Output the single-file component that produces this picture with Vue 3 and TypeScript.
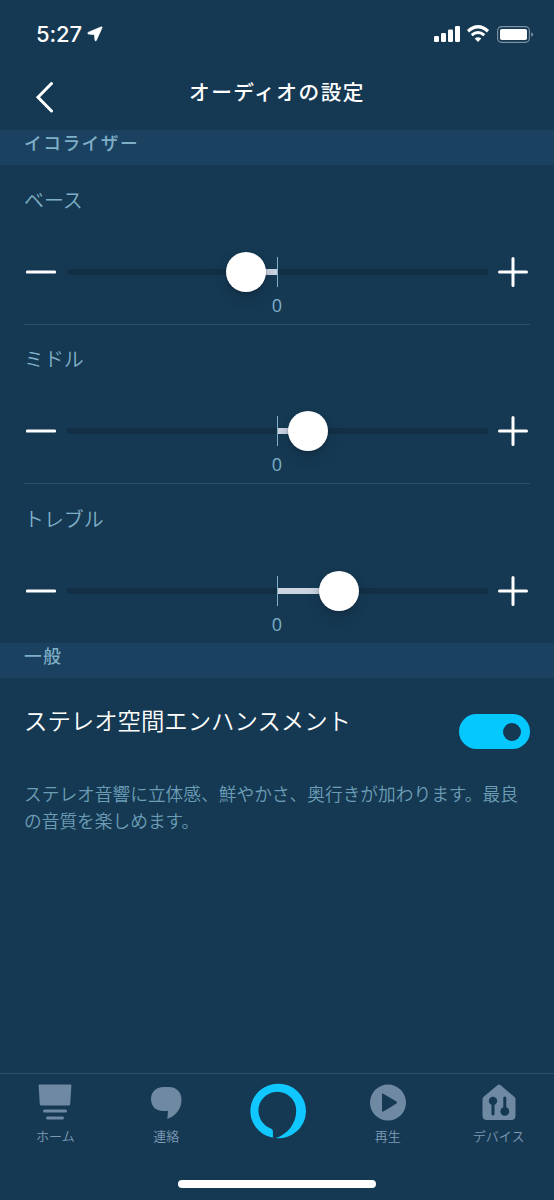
<script setup lang="ts">
interface Band {
  name: string
  value: number
}

const bands: Band[] = [
  { name: 'ベース', value: -31 },
  { name: 'ミドル', value: 31 },
  { name: 'トレブル', value: 62 },
]

const knobStyle = (b: Band) => ({ left: `calc(50% + ${b.value}px)` })
const fillStyle = (b: Band) => ({
  left: `calc(50% + ${Math.min(0, b.value)}px)`,
  width: `${Math.abs(b.value)}px`,
})
</script>

<template>
  <div class="screen">
    <div class="status">
      <span class="time">5:27</span>
      <svg class="loc" width="16" height="16" viewBox="0 0 16 16">
        <path d="M14.200.9 1.200 6.400Q.2 7.600 1.500 8L7.500 8.500 8 14.200Q8.500 15.500 9.300 14.400L15 1.700Q15.200.6 14.200.9Z" fill="#fff" stroke="#fff" stroke-width=".8" />
      </svg>
      <svg class="sys" width="100" height="18" viewBox="0 0 100 18">
        <g fill="#fff">
          <rect x="0" y="11" width="5" height="6" rx="1.3" />
          <rect x="7" y="8" width="5" height="9" rx="1.3" />
          <rect x="14" y="4.500" width="5" height="12.500" rx="1.3" />
          <rect x="21" y="1" width="5" height="16" rx="1.3" />
          <path d="M44 17 40.700 13.500Q44 10.900 47.300 13.500Z" />
          <rect x="66" y="4" width="27" height="11" rx="1.800" />
        </g>
        <g fill="none" stroke="#fff">
          <path d="M34 6.200Q44-2.700 54 6.200" stroke-width="3.200" />
          <path d="M37.700 10.200Q44 4.800 50.300 10.200" stroke-width="3" />
          <rect x="63.600" y="1.700" width="31.800" height="15.600" rx="4" stroke="#7d91a2" stroke-width="1.200" />
        </g>
        <path d="M97.200 7.200Q99.200 8 99.200 9.500T97.200 11.800Z" fill="#7d91a2" />
      </svg>
    </div>

    <header class="header">
      <svg class="back" width="20" height="32" viewBox="0 0 20 32">
        <path d="M16.500 2.500 3 16.200 16.500 30" fill="none" stroke="#fff" stroke-width="3" stroke-linecap="round" stroke-linejoin="miter" />
      </svg>
      <h1>オーディオの設定</h1>
    </header>

    <h2 class="section">イコライザー</h2>
    <div v-for="b in bands" :key="b.name" class="band">
      <div class="name">{{ b.name }}</div>
      <div class="control">
        <svg width="30" height="30" viewBox="0 0 30 30">
          <path d="M1.500 15H28.500" stroke="#fff" stroke-width="3.200" stroke-linecap="round" />
        </svg>
        <div class="track">
          <div class="fill" :style="fillStyle(b)"></div>
          <div class="tick"></div>
          <div class="knob" :style="knobStyle(b)"></div>
        </div>
        <svg width="30" height="30" viewBox="0 0 30 30">
          <path d="M1.500 15H28.500M15 1.500V28.500" stroke="#fff" stroke-width="3" stroke-linecap="round" />
        </svg>
      </div>
      <div class="zero">0</div>
    </div>

    <h2 class="section general">一般</h2>
    <div class="option">
      <span>ステレオ空間エンハンスメント</span>
      <div class="toggle"><i></i></div>
    </div>
    <p class="desc">ステレオ音響に立体感、鮮やかさ、奥行きが加わります。最良の音質を楽しめます。</p>

    <nav class="tabs">
      <div class="tab">
        <svg width="40" height="40" viewBox="0 0.400 40 40">
          <path d="M4.500 2H35.500Q36.500 2 36.400 3L35.200 21.500Q35.100 23 33.800 23H6.200Q4.900 23 4.800 21.500L3.600 3Q3.500 2 4.500 2Z" />
          <rect x="8" y="27" width="24" height="3" rx="1.500" />
          <rect x="11" y="34" width="18" height="3" rx="1.500" />
        </svg>
        <span>ホーム</span>
      </div>
      <div class="tab">
        <svg width="40" height="40" viewBox="0 0.400 40 40">
          <path d="M17.500 4.500H23C31 4.500 35.500 10 35.500 17.500C35.500 27 29 34 21.300 36.400L22 28.500H17C9.500 28.500 5 23.500 5 16.500C5 9.500 10 4.500 17.500 4.500Z" />
        </svg>
        <span>連絡</span>
      </div>
      <div class="tab alexa">
        <svg width="58" height="58" viewBox="-1.400 -0.900 58 58">
          <path d="M28.200.9A27.200 27.200 0 1 1 26.300 55.100C38 51.500 46.800 40.500 46.800 28A18.900 18.900 0 1 0 21 45.300Q23.500 46.300 23.500 48V54.900A27.200 27.200 0 0 1 28.200.9Z" />
        </svg>
      </div>
      <div class="tab">
        <svg width="40" height="40" viewBox="0 0.400 40 40">
          <path fill-rule="evenodd" d="M20 2A18 18 0 1 1 20 38A18 18 0 1 1 20 2ZM14 12V28Q14 29.500 15.300 28.900L28.500 21Q29.700 20 28.500 19L15.300 11.100Q14 10.500 14 12Z" />
        </svg>
        <span>再生</span>
      </div>
      <div class="tab">
        <svg width="40" height="40" viewBox="0 0.400 40 40">
          <path d="M18.600 2.400Q20 1.300 21.400 2.400L35.300 14.200Q36.500 15.200 36.500 16.500V33Q36.500 37.500 32 37.500H8Q3.500 37.500 3.500 33V16.500Q3.500 15.200 4.700 14.200Z" />
          <g class="cut">
            <circle cx="14" cy="18.300" r="4.200" />
            <rect x="12.500" y="18" width="3" height="15" rx="1.500" />
            <circle cx="25.800" cy="28.800" r="4.400" />
            <rect x="24.300" y="14" width="3" height="15" rx="1.500" />
          </g>
        </svg>
        <span>デバイス</span>
      </div>
    </nav>
    <div class="home-bar"></div>
  </div>
</template>

<style>
body {
  margin: 0;
  background: #153952;
}
</style>

<style scoped>
.screen {
  width: 554px;
  height: 1200px;
  display: flex;
  flex-direction: column;
  overflow: hidden;
  background: #153952;
  color: #fff;
  font-family: "Noto Sans CJK JP", sans-serif;
}
.status {
  height: 66px;
  box-sizing: border-box;
  padding: 25px 20px 0 36px;
  display: flex;
  align-items: flex-start;
}
.time {
  width: 51px;
  font: 500 22px/18px Inter, sans-serif;
  letter-spacing: -0.100px;
}
.loc {
  margin-top: 1px;
}
.sys {
  margin-left: auto;
}
.header {
  height: 64px;
  display: grid;
  grid-template-columns: 84px 1fr 84px;
}
.back {
  margin: 15px 0 0 35px;
}
h1 {
  margin: 10px 0 0;
  font-size: 20.700px;
  line-height: 30px;
  font-weight: 500;
  letter-spacing: 1.500px;
  text-align: center;
  white-space: nowrap;
}
.section {
  box-sizing: border-box;
  height: 35.300px;
  margin: 0;
  padding-left: 24px;
  background: #1b4161;
  color: #7fafc7;
  font-size: 17.700px;
  line-height: 25px;
  font-weight: 500;
  letter-spacing: 1.500px;
  flex: none;
}
.general {
  margin-top: -0.800px;
}
.band {
  height: 159.500px;
  flex: none;
  box-sizing: border-box;
  margin: 0 24px;
  padding-top: 20.300px;
  border-bottom: 1px solid #2d5069;
}
.band:nth-of-type(5) {
  border-bottom-color: transparent;
}
.name {
  height: 28px;
  line-height: 28px;
  font-size: 19.900px;
  font-weight: 350;
  color: #7fafc7;
}
.control {
  margin: 43.200px 2px 0;
  height: 30px;
  display: flex;
  align-items: center;
  justify-content: space-between;
}
.track {
  position: relative;
  width: 421px;
  height: 6px;
  border-radius: 3px;
  background: #122f46;
}
.fill {
  position: absolute;
  top: 0;
  height: 6px;
  background: #cbd5e1;
}
.tick {
  position: absolute;
  left: 210.500px;
  top: -12px;
  width: 1.300px;
  height: 30px;
  background: #7fafc7;
}
.knob {
  position: absolute;
  top: -17px;
  width: 40px;
  height: 40px;
  margin-left: -20px;
  border-radius: 50%;
  background: #fff;
  box-shadow: 0 6px 12px rgba(20, 30, 50, 0.3), 0 1px 2px rgba(10, 25, 40, 0.35);
}
.zero {
  margin-top: 6px;
  height: 24px;
  font: 400 18px/24px "Open Sans", sans-serif;
  color: #7fafc7;
  text-align: center;
}
.option {
  display: flex;
  justify-content: space-between;
  padding: 24px 24px 0;
  font-size: 23.400px;
  line-height: 36px;
  font-weight: 350;
}
.toggle {
  width: 71px;
  height: 35px;
  margin-top: 12px;
  box-sizing: border-box;
  padding-right: 9px;
  display: flex;
  align-items: center;
  justify-content: flex-end;
  border-radius: 18px;
  background: #05c8ff;
}
.toggle i {
  width: 18px;
  height: 18px;
  border-radius: 50%;
  background: #153952;
}
.desc {
  margin: 31px 24px 0;
  width: 500px;
  font-size: 17.720px;
  line-height: 26.500px;
  font-weight: 350;
  color: #6c9db6;
}
.tabs {
  margin-top: auto;
  height: 106px;
  flex: none;
  border-top: 1px solid #2d5069;
  display: grid;
  grid-template-columns: repeat(5, 1fr);
}
.tab {
  display: flex;
  flex-direction: column;
  align-items: center;
  padding-top: 9px;
  color: #7e9ab6;
  font-size: 13px;
  line-height: 20px;
  font-weight: 350;
  fill: #6e89a1;
}
.tab span {
  margin-top: 3px;
}
.tab.alexa {
  padding-top: 8px;
  fill: #10c8ff;
}
.cut {
  fill: #153952;
}
.home-bar {
  flex: none;
  width: 198px;
  height: 8px;
  margin: 0 auto 12px;
  border-radius: 4px;
  background: #fff;
}
</style>
